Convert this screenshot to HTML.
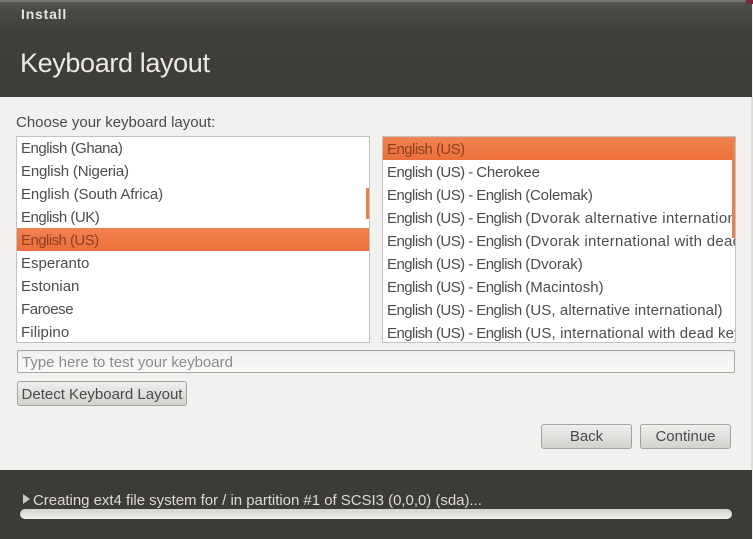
<!DOCTYPE html>
<html><head><meta charset="utf-8"><style>
html,body{margin:0;padding:0}
body{width:753px;height:539px;overflow:hidden;position:relative;background:#f2f1ef;font-family:"Liberation Sans",sans-serif;color:#4c4c4c}
div{position:absolute;box-sizing:border-box}
.t{white-space:nowrap;font-size:15px;line-height:23px;height:23px}
.p{letter-spacing:-.55px}
.box{background:#fff;border:1px solid #c4c2be;overflow:hidden}
.sel{background:linear-gradient(#f08350,#ec6f3b);}
.btn{border:1px solid #a5a39f;border-radius:3px;background:linear-gradient(#f0efed,#d2d1ce);text-align:center;font-size:15px;color:#4a4a4a}
</style></head><body>
<div style="left:0;top:0;width:752px;height:97px;background:linear-gradient(#5a5954 0,#4c4b46 8px,#403f3a 32px,#3d3c37 100%)"></div>
<div style="left:0;top:0;width:752px;height:2px;background:#77756f"></div>
<div style="left:746px;top:0;width:7px;height:4px;background:#7a2a3c"></div>
<div class="t" style="left:21px;top:3px;font-size:14px;font-weight:bold;color:#e6e4df;letter-spacing:.8px">Install</div>
<div class="t" style="left:20px;top:46px;height:34px;line-height:34px;font-size:27px;color:#ece9e3;letter-spacing:-.37px">Keyboard layout</div>
<div style="left:751px;top:97px;width:2px;height:373px;background:#dddcd9"></div>
<div class="t" style="left:16px;top:111px;color:#4a4a4a;">Choose your keyboard layout:</div>

<div class="box" style="left:16px;top:136px;width:354px;height:207px">
<div class="sel" style="left:0;top:91px;width:352px;height:23px"></div>
<div style="left:349px;top:51px;width:4px;height:31px;background:#e8814f"></div>
<div class="t" style="left:4px;top:0;letter-spacing:-.47px">English (Ghana)</div>
<div class="t" style="left:4px;top:23px;letter-spacing:-.18px">English (Nigeria)</div>
<div class="t" style="left:4px;top:46px;letter-spacing:-.1px">English (South Africa)</div>
<div class="t" style="left:4px;top:69px;letter-spacing:-.5px">English (UK)</div>
<div class="t" style="left:4px;top:92px;color:#8c3f22;letter-spacing:-.55px">English (US)</div>
<div class="t" style="left:4px;top:115px">Esperanto</div>
<div class="t" style="left:4px;top:138px">Estonian</div>
<div class="t" style="left:4px;top:161px;letter-spacing:-.4px">Faroese</div>
<div class="t" style="left:4px;top:184px;letter-spacing:.1px">Filipino</div>
</div>

<div class="box" style="left:382px;top:136px;width:354px;height:207px">
<div class="sel" style="left:0;top:0;width:352px;height:23px"></div>
<div class="t" style="left:4px;top:1px;color:#8c3f22;letter-spacing:-.55px">English (US)</div>
<div class="t" style="left:4px;top:24px"><span class="p">English (US) - </span><span style="letter-spacing:-.2px">Cherokee</span></div>
<div class="t" style="left:4px;top:47px"><span class="p">English (US) - English </span><span style="letter-spacing:-.2px">(Colemak)</span></div>
<div class="t" style="left:4px;top:70px"><span class="p">English (US) - English </span><span style="letter-spacing:.35px">(Dvorak alternative international)</span></div>
<div class="t" style="left:4px;top:93px"><span class="p">English (US) - English </span><span style="letter-spacing:.3px">(Dvorak international with dead keys)</span></div>
<div class="t" style="left:4px;top:116px"><span class="p">English (US) - English </span>(Dvorak)</div>
<div class="t" style="left:4px;top:139px"><span class="p">English (US) - English </span>(Macintosh)</div>
<div class="t" style="left:4px;top:162px"><span class="p">English (US) - English </span><span style="letter-spacing:.1px">(US, alternative international)</span></div>
<div class="t" style="left:4px;top:185px"><span class="p">English (US) - English </span><span style="letter-spacing:.15px">(US, international with dead keys)</span></div>
<div style="left:349px;top:0;width:4px;height:101px;background:#e8814f"></div>
</div>

<div style="left:17px;top:350px;width:718px;height:23px;border:1px solid #a8a6a2;border-radius:2px;background:linear-gradient(#f1f0ee,#faf9f8)"></div>
<div class="t" style="left:22px;top:351px;color:#8b8b8b">Type here to test your keyboard</div>
<div class="btn" style="left:17px;top:381px;width:170px;height:25px;line-height:25px">Detect Keyboard Layout</div>
<div class="btn" style="left:541px;top:424px;width:91px;height:25px;line-height:24px">Back</div>
<div class="btn" style="left:640px;top:424px;width:91px;height:25px;line-height:24px">Continue</div>

<div style="left:0;top:470px;width:752px;height:69px;background:#3c3b37"></div>
<div style="left:23px;top:494px;width:0;height:0;border-left:7px solid #c9c7c2;border-top:5px solid transparent;border-bottom:5px solid transparent"></div>
<div class="t" style="left:33px;top:489px;color:#dedbd5;letter-spacing:-.03px">Creating ext4 file system for / in partition #1 of SCSI3 (0,0,0) (sda)...</div>
<div style="left:20px;top:509px;width:712px;height:10px;border-radius:5px;background:linear-gradient(#d5d3ce,#f2f1ee)"></div>
</body></html>
